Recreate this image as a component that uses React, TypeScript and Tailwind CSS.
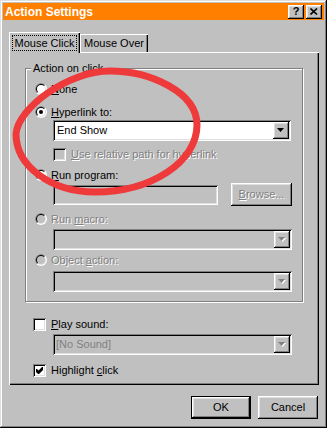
import React from "react";

const raised =
  "shadow-[inset_-1px_-1px_0_#000,inset_1px_1px_0_#fff,inset_-2px_-2px_0_#808080,inset_2px_2px_0_#dfdfdf]";
const sunken =
  "shadow-[inset_1px_1px_0_#808080,inset_-1px_-1px_0_#fff,inset_2px_2px_0_#000,inset_-2px_-2px_0_#dfdfdf]";
const greyed = "text-[#808080] [text-shadow:1px_1px_0_#fff]";

function Radio({ checked = false, disabled = false }: { checked?: boolean; disabled?: boolean }) {
  return (
    <svg width="12" height="12" viewBox="0 0 12 12" className="shrink-0">
      <circle cx="6" cy="6" r="6" fill="#fff" />
      <path d="M1.757 10.243A6 6 0 0 1 10.243 1.757Z" fill="#808080" />
      <circle cx="6" cy="6" r="5" fill="#dfdfdf" />
      <path d="M2.464 9.536A5 5 0 0 1 9.536 2.464Z" fill="#000" />
      <circle cx="6" cy="6" r="4" fill={disabled ? "#c0c0c0" : "#fff"} />
      {checked && <circle cx="6" cy="6" r="2" fill="#000" />}
    </svg>
  );
}

function Check({ checked = false, disabled = false }: { checked?: boolean; disabled?: boolean }) {
  return (
    <div
      className={`w-[13px] h-[13px] shrink-0 flex items-center justify-center ${sunken} ${
        disabled ? "bg-[#c0c0c0]" : "bg-white"
      }`}
    >
      {checked && (
        <svg width="7" height="7" viewBox="0 0 7 7">
          <path d="M0 2v3l2 2h1l4-4V0h-1L2.5 3.5 1 2Z" fill="#000" />
        </svg>
      )}
    </div>
  );
}

function Arrow({ disabled = false }: { disabled?: boolean }) {
  return (
    <div className={`w-[16px] h-full shrink-0 bg-[#c0c0c0] flex items-center justify-center ${raised}`}>
      <svg width="8" height="5" viewBox="0 0 8 5">
        {disabled && <path d="M1 1h7L4.5 5Z" fill="#fff" />}
        <path d="M0 0h7L3.5 4Z" fill={disabled ? "#808080" : "#000"} />
      </svg>
    </div>
  );
}

function Combo({
  className,
  text,
  disabled = false,
}: {
  className: string;
  text?: string;
  disabled?: boolean;
}) {
  return (
    <div className={`h-[21px] p-[2px] flex ${sunken} ${disabled ? "bg-[#c0c0c0]" : "bg-white"} ${className}`}>
      <div className={`flex-1 flex items-center leading-[13px] ${disabled ? "pl-[1px] text-[#808080]" : "pl-[2px]"}`}>
        {text}
      </div>
      <Arrow disabled={disabled} />
    </div>
  );
}

export default function App() {
  return (
    <div className="relative w-[327px] h-[428px] bg-[#c0c0c0] p-[3px] font-['Liberation_Sans',Arial,sans-serif] text-[11px] text-black shadow-[inset_-1px_-1px_0_#000,inset_1px_1px_0_#dfdfdf,inset_-2px_-2px_0_#808080,inset_2px_2px_0_#fff]">
      {/* Title bar */}
      <div className="h-[17px] bg-[#ff8000] flex items-center justify-between pl-[2px] pr-[2px]">
        <span className="text-white font-bold text-[12px] leading-none">Action Settings</span>
        <div className="flex gap-[2px]">
          <div className={`w-[16px] h-[14px] bg-[#c0c0c0] flex items-center justify-center font-bold text-[11px] leading-none ${raised}`}>
            ?
          </div>
          <div className={`w-[16px] h-[14px] bg-[#c0c0c0] flex items-center justify-center ${raised}`}>
            <svg width="8" height="7" viewBox="0 0 8 7">
              <path d="M0.5 0.5L7 6.5M7 0.5L0.5 6.5" stroke="#000" strokeWidth="1.6" />
            </svg>
          </div>
        </div>
      </div>

      {/* Tabs */}
      <div className="ml-[6px] mt-[12px] w-[310px]">
        <div className="flex items-end h-[20px]">
          <div className="relative z-10 w-[71px] h-[21px] -mb-px bg-[#c0c0c0] pl-[3px] pt-[3px] shadow-[inset_1px_1px_0_#fff,inset_-1px_0_0_#000,inset_-2px_0_0_#808080]">
            <div className="w-[65px] h-[16px] border border-dotted border-black flex items-center justify-center leading-[13px]">
              Mouse Click
            </div>
          </div>
          <div className="w-[68px] h-[18px] pt-[1px] flex items-center justify-center leading-[13px] shadow-[inset_1px_1px_0_#fff,inset_-1px_0_0_#000,inset_-2px_0_0_#808080]">
            Mouse Over
          </div>
        </div>

        {/* Panel */}
        <div className="w-[310px] h-[333px] pl-[16px] pt-[16px] flex flex-col shadow-[inset_1px_1px_0_#fff,inset_-1px_-1px_0_#000,inset_-2px_-2px_0_#808080]">
          {/* Group box */}
          <div className="relative w-[278px] h-[234px] shrink-0 border border-[#808080] pl-[9px] flex flex-col shadow-[inset_1px_1px_0_#fff,1px_1px_0_#fff]">
            <span className="absolute left-[5px] -top-[7px] px-[2px] bg-[#c0c0c0] leading-[13px]">Action on click</span>

            <div className="mt-[12px] h-[16px] flex items-center gap-[4px]">
              <Radio />
              <span className="leading-[13px]">
                <u>N</u>one
              </span>
            </div>

            <div className="mt-[7px] h-[16px] flex items-center gap-[4px]">
              <Radio checked />
              <span className="leading-[13px]">
                <u>H</u>yperlink to:
              </span>
            </div>
            <Combo className="ml-[18px] w-[238px]" text="End Show" />

            <div className="mt-[5px] ml-[18px] h-[16px] flex items-center gap-[5px]">
              <Check disabled />
              <span className={`leading-[13px] ${greyed}`}>
                <u>U</u>se relative path for hyperlink
              </span>
            </div>

            <div className="mt-[5px] h-[16px] flex items-center gap-[4px]">
              <Radio />
              <span className="leading-[13px]">
                <u>R</u>un program:
              </span>
            </div>
            <div className="ml-[18px] h-[23px] flex items-center">
              <div className={`w-[165px] h-[20px] bg-[#c0c0c0] ${sunken}`} />
              <div className={`ml-[13px] w-[61px] h-[23px] flex items-center justify-center leading-[13px] ${raised} ${greyed}`}>
                <span>
                  <u>B</u>rowse...
                </span>
              </div>
            </div>

            <div className="mt-[5px] h-[16px] flex items-center gap-[4px]">
              <Radio disabled />
              <span className={`leading-[13px] ${greyed}`}>
                Run <u>m</u>acro:
              </span>
            </div>
            <Combo className="mt-[2px] ml-[18px] w-[239px]" disabled />

            <div className="mt-[2px] h-[16px] flex items-center gap-[4px]">
              <Radio disabled />
              <span className={`leading-[13px] ${greyed}`}>
                Object <u>a</u>ction:
              </span>
            </div>
            <Combo className="mt-[3px] ml-[18px] w-[239px]" disabled />
          </div>

          <div className="mt-[14px] ml-[8px] h-[16px] flex items-center gap-[5px]">
            <Check />
            <span className="leading-[13px]">
              <u>P</u>lay sound:
            </span>
          </div>
          <Combo className="mt-[2px] ml-[28px] w-[239px]" text="[No Sound]" disabled />

          <div className="mt-[7px] ml-[8px] h-[16px] flex items-center gap-[5px]">
            <Check checked />
            <span className="leading-[13px]">
              Highlight <u>c</u>lick
            </span>
          </div>
        </div>

        {/* Dialog buttons */}
        <div className="mt-[11px] flex justify-end gap-[7px] pr-[1px]">
          <div className="w-[60px] h-[23px] flex items-center justify-center leading-[13px] shadow-[inset_0_0_0_1px_#000,inset_-2px_-2px_0_#000,inset_2px_2px_0_#fff,inset_-3px_-3px_0_#808080,inset_3px_3px_0_#dfdfdf]">
            OK
          </div>
          <div className={`w-[60px] h-[23px] flex items-center justify-center leading-[13px] ${raised}`}>Cancel</div>
        </div>
      </div>

      {/* Hand-drawn red marker ring over the dialog */}
      <svg className="absolute left-0 top-0 w-[327px] h-[428px] pointer-events-none" viewBox="0 0 327 428">
        <path
          d="M110 71C150 71 197 92 197 125C197 162 151 192 95 192C51 192 16 166 16 134C18 108 68 71 110 71Z"
          fill="none"
          stroke="#ee3a3a"
          strokeWidth="7"
        />
      </svg>
    </div>
  );
}
